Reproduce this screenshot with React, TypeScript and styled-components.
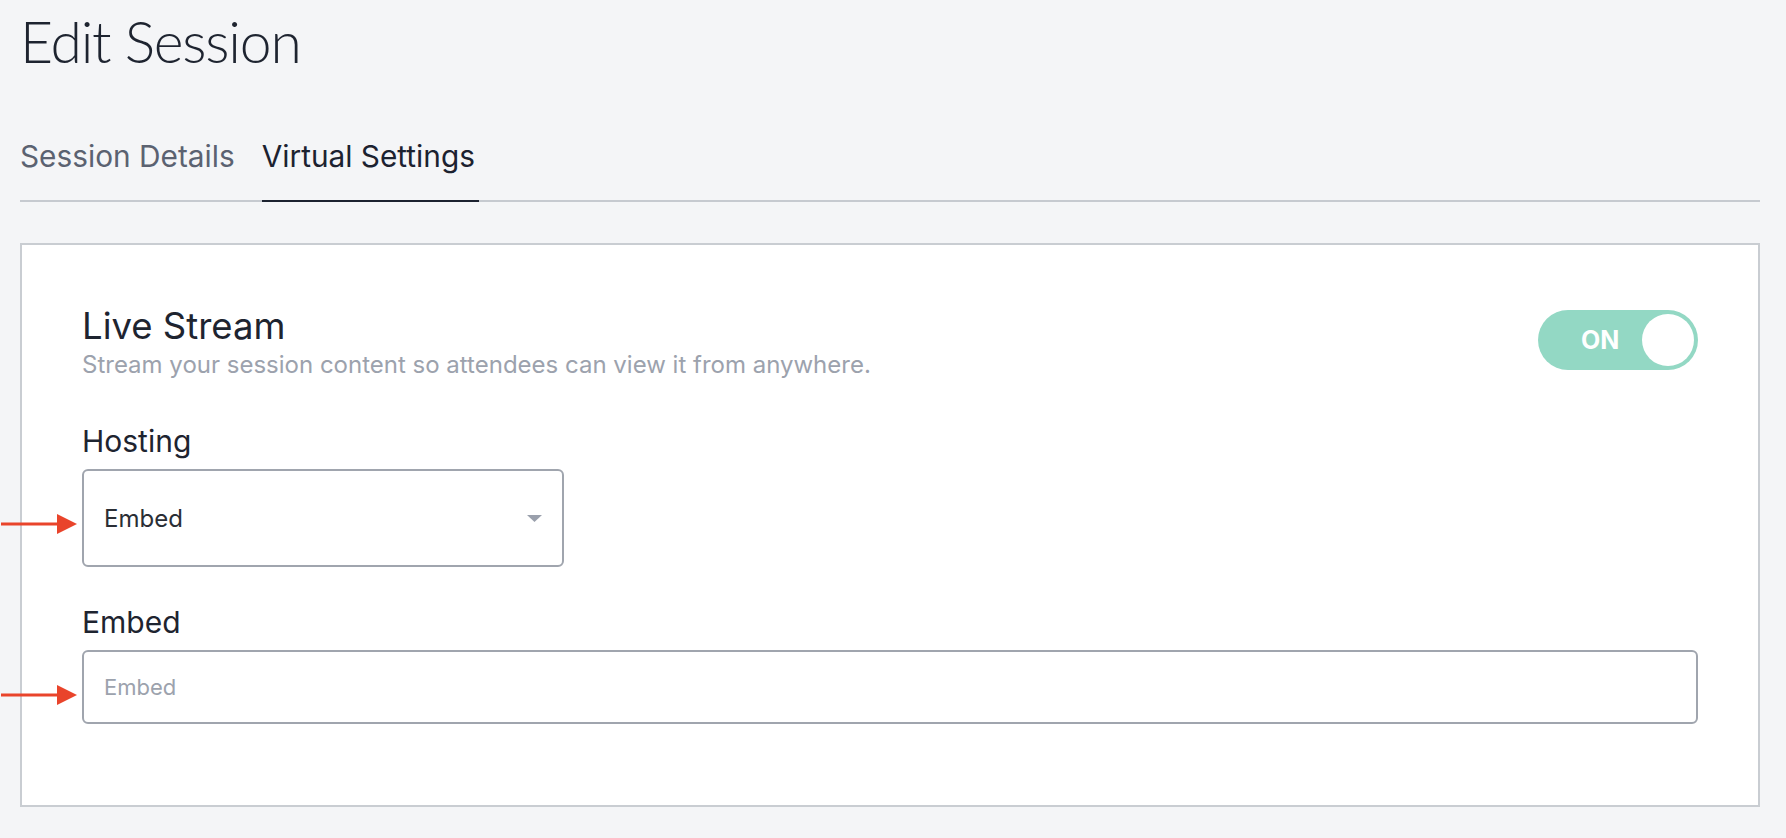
import React from 'react';
import styled, {createGlobalStyle} from 'styled-components';

const GlobalStyle = createGlobalStyle`
  html, body
  {
    margin: 0;
    padding: 0;
    background: #f4f5f7;
  }
  body
  {
    font-family: Inter, "Noto Sans", "Liberation Sans", sans-serif;
    color: #1e2430;
  }
  *
  {
    box-sizing: border-box;
  }
`

const Arrow: React.FC = () => (
  <ArrowMark width="78" height="20" viewBox="0 0 78 20" aria-hidden="true">
    <line x1="2" y1="10" x2="60" y2="10" stroke="#e9442b" strokeWidth="3" />
    <polygon points="58,0 78,10 58,20" fill="#e9442b" />
  </ArrowMark>
);

const App: React.FC = () =>
{
  return (
    <>
      <GlobalStyle />
      <Page>
        <Title>Edit Session</Title>
        <TabBar>
          <Tab>Session Details</Tab>
          <Tab $active>Virtual Settings</Tab>
        </TabBar>
        <Panel>
          <Header>
            <div>
              <Heading>Live Stream</Heading>
              <Subtitle>Stream your session content so attendees can view it from anywhere.</Subtitle>
            </div>
            <Toggle role="switch" aria-checked="true">
              <span>ON</span>
              <Knob />
            </Toggle>
          </Header>

          <Field>
            <Label>Hosting</Label>
            <Control $width="482px" $offset="6px">
              <Arrow />
              <SelectBox>
                <span>Embed</span>
                <svg width="15" height="7" viewBox="0 0 15 7" aria-hidden="true">
                  <polygon points="0,0 15,0 7.5,7" fill="#9aa0ac" />
                </svg>
              </SelectBox>
            </Control>
          </Field>

          <Field $gap="38px">
            <Label>Embed</Label>
            <Control $width="100%" $offset="8px">
              <Arrow />
              <TextInput placeholder="Embed" />
            </Control>
          </Field>
        </Panel>
      </Page>
    </>
  );
}

const Page = styled.main`
  padding: 7px 26px 0 20px;
`

const Title = styled.h1`
  margin: 0 0 63px;
  font-family: Lato, "Liberation Sans", sans-serif;
  font-weight: 300;
  font-size: 57px;
  line-height: 68px;
  letter-spacing: -1.2px;
  color: #1e2430;
`

const TabBar = styled.nav`
  display: flex;
  gap: 23px;
  border-bottom: 2px solid #c6cad0;
`

const Tab = styled.div<{$active?: boolean}>`
  padding: 0 4px 26px 0;
  margin-bottom: -2px;
  font-size: 29.8px;
  line-height: 36px;
  color: ${p => p.$active ? '#1c2230' : '#5b6271'};
  border-bottom: 2px solid ${p => p.$active ? '#1c2230' : 'transparent'};
  cursor: pointer;
`

const Panel = styled.section`
  margin-top: 41px;
  background: #fff;
  border: 2px solid #c9cdd2;
  padding: 61px 60px 81px;
`

const Header = styled.div`
  display: flex;
  justify-content: space-between;
  align-items: flex-start;
`

const Heading = styled.h2`
  margin: 0;
  font-size: 36.5px;
  font-weight: 400;
  line-height: 40px;
  color: #1e2430;
`

const Subtitle = styled.p`
  margin: 7px 0 0;
  font-size: 24px;
  line-height: 24px;
  color: #9ca2ad;
`

const Toggle = styled.div`
  margin-top: 4px;
  width: 160px;
  height: 60px;
  border-radius: 30px;
  background: #93d8c4;
  display: flex;
  align-items: center;
  padding: 0 4px 0 43px;
  span
  {
    color: #fff;
    font-weight: 700;
    font-size: 25px;
    line-height: 1;
  }
`

const Knob = styled.i`
  margin-left: auto;
  width: 52px;
  height: 52px;
  border-radius: 50%;
  background: #fff;
`

const Field = styled.div<{$gap?: string}>`
  margin-top: ${p => p.$gap || '47px'};
`

const Label = styled.label`
  display: block;
  font-size: 30px;
  line-height: 34px;
  color: #1e2430;
  margin-bottom: 11px;
`

const Control = styled.div<{$width: string; $offset: string}>`
  position: relative;
  width: ${p => p.$width};
  svg:first-child
  {
    position: absolute;
    right: calc(100% + 5px);
    top: calc(50% + ${p => p.$offset});
    transform: translateY(-50%);
  }
`

const ArrowMark = styled.svg`
  display: block;
`

const SelectBox = styled.div`
  height: 98px;
  border: 2px solid #a0a5ae;
  border-radius: 6px;
  display: flex;
  align-items: center;
  justify-content: space-between;
  padding: 0 20px;
  font-size: 24px;
  color: #2a2e35;
  background: #fff;
  cursor: pointer;
`

const TextInput = styled.input`
  display: block;
  width: 100%;
  height: 74px;
  border: 2px solid #a0a5ae;
  border-radius: 6px;
  padding: 0 20px;
  font-family: inherit;
  font-size: 22px;
  color: #2a2e35;
  outline: none;
  &::placeholder
  {
    color: #9ca2ad;
  }
`

export default App
